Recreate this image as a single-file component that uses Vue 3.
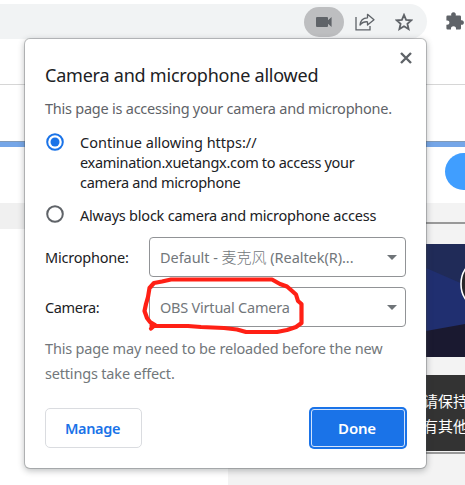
<script setup>
import { ref } from 'vue'

const choice = ref('allow')
const choices = [
  { id: 'allow', lines: ['Continue allowing https://', 'examination.xuetangx.com to access your', 'camera and microphone'] },
  { id: 'block', lines: ['Always block camera and microphone access'] },
]
const devices = [
  { label: 'Microphone:', before: 'Default - ', cjk: '麦克风', after: ' (Realtek(R)...', kind: 'mic' },
  { label: 'Camera:', before: 'OBS Virtual Camera', cjk: '', after: '', kind: 'cam' },
]
</script>

<template>
  <div class="screen">
    <header class="toolbar">
      <div class="omnibox">
        <span class="camera-chip">
          <svg width="16" height="12" viewBox="0 0 16 12"><path d="M1 1h10q1 0 1 1v2.3L15.6 1v10L12 7.7V10q0 1-1 1H1q-1 0-1-1V2q0-1 1-1z" fill="#5f6368" /></svg>
        </span>
        <svg class="share" width="20" height="18" viewBox="0 0 20 18" fill="none" stroke="#5f6368" stroke-width="1.3">
          <path d="M1 4v12.800h14V13" />
          <path d="M5 12c.4-4.500 3-7 7.500-7.200V1.300L19 6.700l-6.500 5.300V8.800C9.500 8.600 7 9.400 5 12z" stroke-linejoin="round" />
        </svg>
        <svg class="star" width="18" height="18" viewBox="0 0 18 18" fill="none" stroke="#5f6368" stroke-width="1.800"><path d="M9 1.900l2.100 4.900 5.300.5-4 3.500 1.200 5.200L9 13.200l-4.600 2.800 1.200-5.200-4-3.500 5.300-.5z" /></svg>
      </div>
      <svg class="puzzle" width="18" height="18" viewBox="0 0 18 18"><path d="M1.500 3.500H5.300C4.700 1.600 5.800.2 7.500.2S10.300 1.600 9.700 3.500h4.100q1.200 0 1.200 1.200v3.600c1.600-.5 2.900.6 2.900 2.200s-1.300 2.700-2.900 2.200v3.600q0 1.200-1.200 1.200H10c.3-2-.7-3.200-2.500-3.200s-2.800 1.200-2.500 3.200H1.600Q.4 17.500.4 16.300v-3.600c1.900.3 3-.6 3-2.200S2.300 8.200.4 8.500V4.700q0-1.200 1.100-1.200z" fill="#5f6368" /></svg>
    </header>
    <div class="site-bar"></div>
    <div class="blue-bar"></div>
    <div class="action-row"><span class="action"></span></div>
    <div class="content">
      <div class="paper"></div>
      <aside class="side">
        <div class="rule"></div>
        <svg class="video" width="60" height="113" viewBox="0 0 60 113">
          <rect width="60" height="113" fill="#202f70" />
          <path d="M0 0h60v41L21 24 0 21z" fill="#202b58" />
          <path d="M0 90l21-3 39-7v33H0z" fill="#1a1930" />
          <ellipse cx="69" cy="40" rx="13" ry="20" fill="#292629" stroke="#fff" stroke-width="1.600" />
        </svg>
        <div class="notice"><p>请保持</p><p>有其他</p></div>
      </aside>
    </div>

    <section class="bubble">
      <svg class="close" width="12" height="12" viewBox="0 0 12 12" stroke="#5f6368" stroke-width="2.400"><path d="M1 1l10 10M11 1L1 11" /></svg>
      <h1>Camera and microphone allowed</h1>
      <p class="summary">This page is accessing your camera and microphone.</p>
      <div class="choices">
        <div v-for="c in choices" :key="c.id" class="choice" :class="c.id" @click="choice = c.id">
          <svg width="18" height="18" viewBox="0 0 18 18">
            <circle cx="9" cy="9" r="7.800" fill="none" stroke-width="2" :stroke="choice === c.id ? '#1a73e8' : '#5f6368'" />
            <circle v-if="choice === c.id" cx="9" cy="9" r="4.500" fill="#1a73e8" />
          </svg>
          <div><div v-for="line in c.lines" :key="line" class="line">{{ line }}</div></div>
        </div>
      </div>
      <div v-for="d in devices" :key="d.kind" class="device" :class="d.kind">
        <span class="label">{{ d.label }}</span>
        <div class="select">
          <span class="value"><span>{{ d.before }}</span><span v-if="d.cjk" class="cjk">{{ d.cjk }}</span><span v-if="d.after">{{ d.after }}</span></span>
          <svg width="10" height="5" viewBox="0 0 10 5"><path d="M0 0h10L5 5z" fill="#6f7478" /></svg>
        </div>
      </div>
      <div class="hint"><div>This page may need to be reloaded before the new</div><div class="second">settings take effect.</div></div>
      <footer>
        <button class="manage">Manage</button>
        <button class="done">Done</button>
      </footer>
    </section>

    <svg class="marker" width="170" height="70" viewBox="140 270 170 70" fill="none" stroke="#ff2015" stroke-width="4.200" stroke-linecap="round" stroke-linejoin="round">
      <path d="M151 328.500L155 325 150 322 147 318 144.500 311 146 304 148 297 149.500 288 154 283 162 281.500 171 279.500H272L280 284 287 286.500 291 290 296 294.500 298 301 301.500 304V323L296 327 287 330 277 332H246L237 329.500 224 328 201 327 188 326H151.500" />
    </svg>
  </div>
</template>

<style>
body { background: #fff; overflow: hidden; }
</style>

<style scoped>
* { box-sizing: border-box; }
h1, p { margin: 0; font-weight: 400; }
svg { display: block; flex: none; }
.screen { position: relative; width: 465px; height: 485px; overflow: hidden; display: flex; flex-direction: column; background: #fff; font-family: "Noto Sans", "Noto Sans CJK SC", sans-serif; font-size: 14.500px; letter-spacing: -.22px; color: #202124; white-space: pre; }
.toolbar { flex: none; height: 85px; padding-top: 4px; display: flex; align-items: flex-start; border-bottom: 1px solid #d6d6d6; }
.omnibox { width: 427px; height: 35px; flex: none; background: #f1f3f4; border-radius: 0 18px 18px 0; display: flex; align-items: center; padding-left: 304px; }
.camera-chip { width: 40px; height: 30px; border-radius: 15px; background: #bdbec0; display: flex; align-items: center; justify-content: center; }
.share { margin-left: 11px; }
.star { margin-left: 20px; }
.puzzle { margin: 8px 0 0 19px; }
.site-bar { flex: none; height: 56px; }
.blue-bar { flex: none; height: 6px; background: #75a6e8; border-top: 1px solid #819ab8; }
.action-row { flex: none; height: 56px; display: flex; padding: 6px 0 0 445px; }
.action { width: 110px; height: 37px; flex: none; border-radius: 19px; background: #409eff; }
.content { flex: 1; display: flex; background: #f0f0f0; }
.paper { width: 228px; margin-top: 26px; background: #fff; }
.side { flex: 1; padding: 19px 0 0 177px; background: #f3f3f3; overflow: hidden; }
.rule { height: 2px; background: #999; }
.video { margin-top: 20px; }
.notice { margin-top: 18px; height: 79px; padding: 13px 0 0 18px; background: #333; color: #fff; border-bottom: 2px solid #999; font: 15px/25px "Noto Sans CJK SC", sans-serif; letter-spacing: 0; box-shadow: inset 0 -1px #f3f3f3; }

.bubble { position: absolute; left: 25px; top: 39px; width: 401px; height: 429px; padding: 22px 20px 0; background: #fff; border-radius: 5px; box-shadow: 0 0 0 1px rgba(60, 64, 67, .28), 0 2px 6px 1px rgba(60, 64, 67, .32); }
.close { position: absolute; right: 14px; top: 13px; }
h1 { font-size: 18px; line-height: 28px; letter-spacing: -.22px; }
.summary { margin-top: 7px; line-height: 24px; color: #5f6368; letter-spacing: -.24px; }
.choices { margin-top: 12px; display: flex; flex-direction: column; gap: 13px; }
.choice { display: flex; align-items: flex-start; gap: 16px; }
.choice > svg { margin: 1px 0 0 1px; }
.choice.block > svg { margin-top: 0; }
.line { height: 20px; line-height: 20px; }
.allow .line { letter-spacing: -.3px; }
.allow .line:first-child { letter-spacing: 0; }
.device { height: 40px; display: flex; align-items: center; }
.mic { margin-top: 12px; margin-bottom: 10px; }
.label { width: 104px; flex: none; }
.cam .label { letter-spacing: -.35px; }
.select { flex: 1; max-width: 257px; height: 40px; border: 1px solid #919396; border-radius: 4px; display: flex; align-items: center; justify-content: space-between; padding: 0 8px 0 10px; color: #72777b; }
.mic .value { letter-spacing: -.05px; }
.cjk { font: 300 15px/20px "Noto Sans CJK SC", sans-serif; letter-spacing: 0; }
.hint { margin-top: 9px; line-height: 25px; color: #72777b; letter-spacing: -.18px; }
footer { display: flex; justify-content: space-between; margin-top: 22px; }
button { font: 500 15px/20px "Noto Sans", sans-serif; height: 40px; border-radius: 5px; padding: 0 2px 0 0; }
.manage { width: 97px; border: 1px solid #dadce0; color: #1a73e8; background: #fff; font-size: 14.500px; font-weight: 600; letter-spacing: -.35px; }
.done { width: 94px; height: 38px; margin: 1px 1px 0 0; border: 1px solid #d2e3fc; border-radius: 3px; color: #fff; background: #1a73e8; font-weight: 600; letter-spacing: -.2px; box-shadow: 0 0 0 2px #1a73e8; }
.marker { position: absolute; left: 140px; top: 270px; pointer-events: none; }
</style>
